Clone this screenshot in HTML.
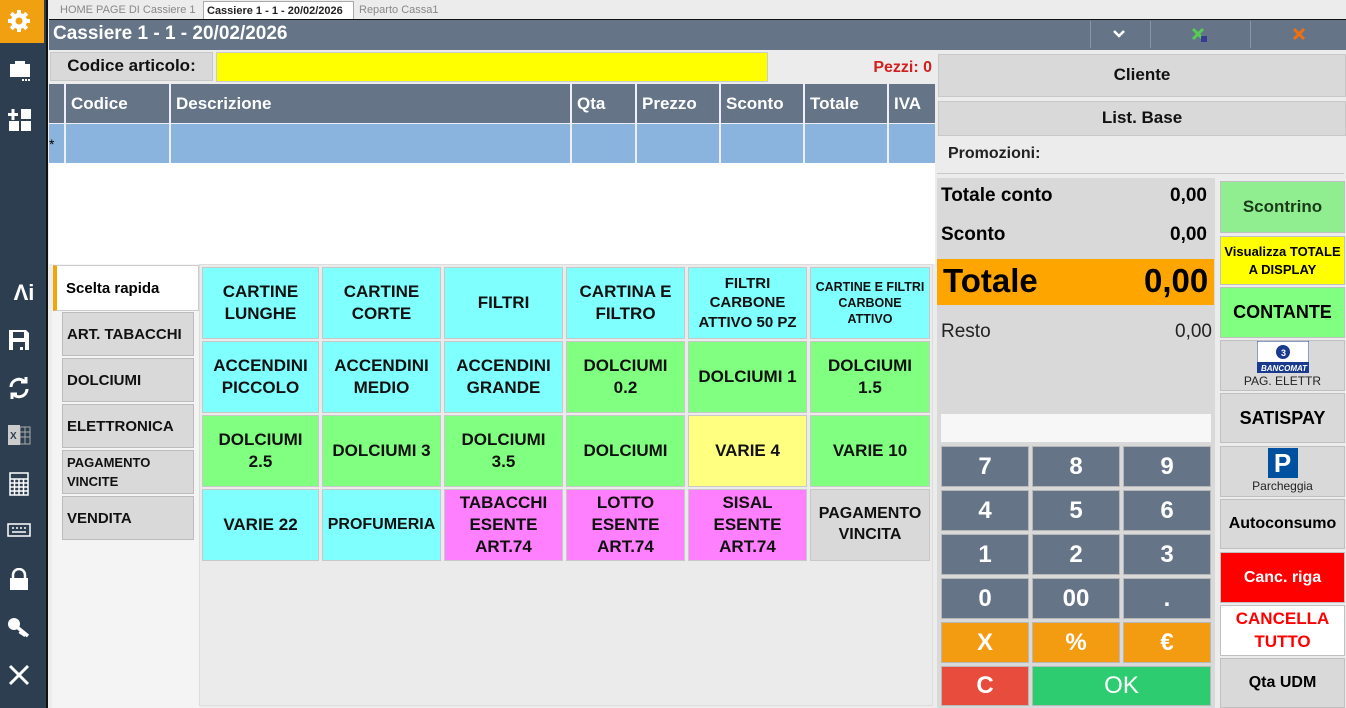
<!DOCTYPE html>
<html><head><meta charset="utf-8">
<style>
*{box-sizing:border-box;margin:0;padding:0}
body{width:1346px;height:708px;overflow:hidden;background:#ececec;font-family:"Liberation Sans",sans-serif;position:relative}
.a{position:absolute}
.b{position:absolute;display:flex;align-items:center;justify-content:center;text-align:center;font-weight:bold;border:1px solid #c8c8c8;line-height:1.3}
.g{font-size:17px;color:#111}
.c{background:#80ffff}.gr{background:#80ff80}.y{background:#ffff80}.p{background:#ff80ff}.gy{background:#d9d9d9}
.k{background:#657487;color:#fff;font-size:24px;border:1px solid #b8b8b8}
.hd{position:absolute;top:84px;height:39px;color:#fff;font-weight:bold;font-size:17px;padding:10px 0 0 5px;border-right:2px solid #eef}
.rw{position:absolute;top:124px;height:39px;background:#8ab3de;border-right:2px solid #eef}
.side{position:absolute;left:0;width:48px;display:flex;justify-content:center;color:#fff}
.tb{position:absolute;left:62px;width:132px;height:44px;background:#d9d9d9;border:1px solid #bcbcbc;font-weight:bold;font-size:15px;display:flex;align-items:center;padding-left:4px;color:#111}
.r{position:absolute;left:1220px;width:125px;display:flex;align-items:center;justify-content:center;text-align:center;font-weight:bold;border:1px solid #c0c0c0;font-size:17px;line-height:1.35}
</style></head><body>
<div class="a" style="left:0;top:0;width:48px;height:708px;background:#2d3e50;border-right:2px solid #111"></div>
<div class="a" style="left:0;top:0;width:44px;height:43px;background:#f0a010"></div>
<svg class="a" style="left:6px;top:8px" width="26" height="26" viewBox="0 0 26 26"><g fill="#fff"><circle cx="13" cy="13" r="8"/><rect x="11" y="2" width="4" height="22"/><rect x="2" y="11" width="22" height="4"/><rect x="11" y="2" width="4" height="22" transform="rotate(45 13 13)"/><rect x="11" y="2" width="4" height="22" transform="rotate(-45 13 13)"/></g><circle cx="13" cy="13" r="3.5" fill="#f0a010"/></svg>
<svg class="a" style="left:8px;top:60px" width="24" height="24"><rect x="2" y="4" width="20" height="13" fill="#fff"/><rect x="7" y="1" width="10" height="4" fill="#fff"/><rect x="14" y="19" width="2" height="2" fill="#fff"/><rect x="17" y="19" width="2" height="2" fill="#fff"/><rect x="20" y="19" width="2" height="2" fill="#fff"/></svg>
<svg class="a" style="left:8px;top:108px" width="24" height="24"><g fill="#fff"><rect x="0" y="5" width="10" height="3"/><rect x="3.5" y="1" width="3" height="11"/><rect x="13" y="1" width="10" height="10"/><rect x="1" y="13" width="10" height="10"/><rect x="13" y="13" width="10" height="10"/></g></svg>
<div class="side" style="top:280px;font-weight:bold;font-size:22px">Λi</div>
<svg class="a" style="left:8px;top:329px" width="22" height="22"><path d="M1 1h17l3 3v17H1z" fill="#fff"/><rect x="5" y="3" width="11" height="6" fill="#2d3e50"/><rect x="5" y="13" width="12" height="8" fill="#2d3e50"/><rect x="12" y="18" width="3" height="3" fill="#fff"/></svg>
<svg class="a" style="left:7px;top:376px" width="24" height="24" fill="none" stroke="#fff" stroke-width="3"><path d="M4 11a8 8 0 0 1 14-5"/><path d="M20 13a8 8 0 0 1-14 5"/><path d="M14 6h5V1" /><path d="M10 18H5v5"/></svg>
<svg class="a" style="left:7px;top:424px" width="24" height="22"><rect x="9" y="3" width="14" height="17" fill="none" stroke="#aaa"/><path d="M13 3v17M18 3v17M9 8h14M9 13h14" stroke="#aaa"/><rect x="1" y="1" width="12" height="20" fill="#ccc"/><text x="3" y="15" font-size="10" font-weight="bold" fill="#2d3e50" font-family="Liberation Sans">X</text></svg>
<svg class="a" style="left:9px;top:472px" width="20" height="24" fill="none" stroke="#fff" stroke-width="1.5"><rect x="1" y="1" width="18" height="22"/><path d="M1 7h18M1 11h18M1 15h18M1 19h18M5.5 7v16M10 7v16M14.5 7v16"/></svg>
<svg class="a" style="left:7px;top:523px" width="24" height="14" fill="none" stroke="#fff" stroke-width="1.5"><rect x="1" y="1" width="22" height="12"/><path d="M5 5h2M9 5h2M13 5h2M17 5h2M5 9h14" /></svg>
<svg class="a" style="left:9px;top:568px" width="20" height="22"><path d="M4 10V7a6 6 0 0 1 12 0v3" fill="none" stroke="#fff" stroke-width="2.5"/><rect x="1" y="10" width="18" height="12" fill="#fff"/></svg>
<svg class="a" style="left:7px;top:617px" width="24" height="22"><circle cx="7" cy="7" r="6" fill="#fff"/><path d="M10 10l11 9M15 14l-2 3M18 16l-2 3" stroke="#fff" stroke-width="3.5"/></svg>
<svg class="a" style="left:7px;top:663px" width="24" height="24"><path d="M3 3l18 18M21 3L3 21" stroke="#fff" stroke-width="3"/></svg>
<div class="a" style="left:56px;top:2px;height:17px;font-size:11px;color:#888;padding-left:4px;line-height:17px">HOME PAGE DI Cassiere 1</div>
<div class="a" style="left:203px;top:1px;width:151px;height:19px;background:#fff;border:1px solid #aaa;border-bottom:none;font-size:11px;font-weight:bold;color:#222;padding-left:3px;line-height:18px">Cassiere 1 - 1 - 20/02/2026</div>
<div class="a" style="left:359px;top:2px;font-size:11px;color:#888;line-height:17px">Reparto Cassa1</div>
<div class="a" style="left:49px;top:19px;width:1297px;height:31px;background:#657487;border-top:1px solid #111"></div>
<div class="a" style="left:53px;top:23px;color:#fff;font-weight:bold;font-size:19px">Cassiere 1 - 1 - 20/02/2026</div>
<div class="a" style="left:1090px;top:21px;width:1px;height:27px;background:#8a96a6"></div>
<div class="a" style="left:1150px;top:21px;width:1px;height:27px;background:#8a96a6"></div>
<div class="a" style="left:1250px;top:21px;width:1px;height:27px;background:#8a96a6"></div>
<svg class="a" style="left:1112px;top:29px" width="14" height="10"><path d="M2 2l5 5 5-5" fill="none" stroke="#fff" stroke-width="2.5"/></svg>
<svg class="a" style="left:1191px;top:27px" width="18" height="16"><path d="M2 2l10 10M12 2L2 12" stroke="#5c5" stroke-width="3"/><rect x="10" y="9" width="6" height="6" fill="#3a3a90"/></svg>
<svg class="a" style="left:1292px;top:27px" width="14" height="14"><path d="M2 2l10 10M12 2L2 12" stroke="#f07010" stroke-width="3"/></svg>
<div class="b" style="left:50px;top:52px;width:163px;height:29px;background:#d9d9d9;font-size:17px;color:#111">Codice articolo:</div>
<div class="a" style="left:216px;top:52px;width:552px;height:30px;background:#ffff00;border:1px solid #ccc"></div>
<div class="a" style="left:868px;top:59px;color:#d02020;font-weight:bold;font-size:16px;width:64px;text-align:right">Pezzi: 0</div>
<div class="a" style="left:49px;top:84px;width:886px;height:180px;background:#fff"></div>
<div class="a" style="left:49px;top:84px;width:886px;height:39px;background:#657487"></div>
<div class="hd" style="left:49px;width:17px"></div>
<div class="hd" style="left:66px;width:105px">Codice</div>
<div class="hd" style="left:171px;width:401px">Descrizione</div>
<div class="hd" style="left:572px;width:65px">Qta</div>
<div class="hd" style="left:637px;width:84px">Prezzo</div>
<div class="hd" style="left:721px;width:84px">Sconto</div>
<div class="hd" style="left:805px;width:84px">Totale</div>
<div class="hd" style="left:889px;width:46px;border:none">IVA</div>
<div class="a" style="left:49px;top:123px;width:886px;height:1px;background:#eef"></div>
<div class="rw" style="left:49px;width:17px;font-size:14px;padding-top:12px;text-align:left">*</div>
<div class="rw" style="left:66px;width:105px"></div>
<div class="rw" style="left:171px;width:401px"></div>
<div class="rw" style="left:572px;width:65px"></div>
<div class="rw" style="left:637px;width:84px"></div>
<div class="rw" style="left:721px;width:84px"></div>
<div class="rw" style="left:805px;width:84px"></div>
<div class="rw" style="left:889px;width:46px;border:none"></div>
<div class="a" style="left:52px;top:264px;width:148px;height:444px;background:#f4f4f4"></div>
<div class="a" style="left:53px;top:265px;width:146px;height:46px;background:#fff;border:1px solid #ccc;border-left:4px solid #f5a50a;font-weight:bold;font-size:15px;padding:14px 0 0 9px">Scelta rapida</div>
<div class="tb" style="top:312px">ART. TABACCHI</div>
<div class="tb" style="top:358px">DOLCIUMI</div>
<div class="tb" style="top:404px">ELETTRONICA</div>
<div class="tb" style="top:450px;font-size:13px;line-height:19px">PAGAMENTO<br>VINCITE</div>
<div class="tb" style="top:496px">VENDITA</div>
<div class="a" style="left:199px;top:264px;width:734px;height:442px;background:#ebebeb;border:1px solid #ddd"></div>
<div class="b g c" style="left:202px;top:267px;width:117px;height:72px">CARTINE<br>LUNGHE</div>
<div class="b g c" style="left:322px;top:267px;width:119px;height:72px">CARTINE<br>CORTE</div>
<div class="b g c" style="left:444px;top:267px;width:119px;height:72px">FILTRI</div>
<div class="b g c" style="left:566px;top:267px;width:119px;height:72px">CARTINA E<br>FILTRO</div>
<div class="b g c" style="left:688px;top:267px;width:119px;height:72px;font-size:15px">FILTRI<br>CARBONE<br>ATTIVO 50 PZ</div>
<div class="b g c" style="left:810px;top:267px;width:120px;height:72px;font-size:12.5px">CARTINE E FILTRI<br>CARBONE<br>ATTIVO</div>
<div class="b g c" style="left:202px;top:341px;width:117px;height:72px">ACCENDINI<br>PICCOLO</div>
<div class="b g c" style="left:322px;top:341px;width:119px;height:72px">ACCENDINI<br>MEDIO</div>
<div class="b g c" style="left:444px;top:341px;width:119px;height:72px">ACCENDINI<br>GRANDE</div>
<div class="b g gr" style="left:566px;top:341px;width:119px;height:72px">DOLCIUMI<br>0.2</div>
<div class="b g gr" style="left:688px;top:341px;width:119px;height:72px">DOLCIUMI 1</div>
<div class="b g gr" style="left:810px;top:341px;width:120px;height:72px">DOLCIUMI<br>1.5</div>
<div class="b g gr" style="left:202px;top:415px;width:117px;height:72px">DOLCIUMI<br>2.5</div>
<div class="b g gr" style="left:322px;top:415px;width:119px;height:72px">DOLCIUMI 3</div>
<div class="b g gr" style="left:444px;top:415px;width:119px;height:72px">DOLCIUMI<br>3.5</div>
<div class="b g gr" style="left:566px;top:415px;width:119px;height:72px">DOLCIUMI</div>
<div class="b g y" style="left:688px;top:415px;width:119px;height:72px">VARIE 4</div>
<div class="b g gr" style="left:810px;top:415px;width:120px;height:72px">VARIE 10</div>
<div class="b g c" style="left:202px;top:489px;width:117px;height:72px">VARIE 22</div>
<div class="b g c" style="left:322px;top:489px;width:119px;height:72px;font-size:16px">PROFUMERIA</div>
<div class="b g p" style="left:444px;top:489px;width:119px;height:72px">TABACCHI<br>ESENTE<br>ART.74</div>
<div class="b g p" style="left:566px;top:489px;width:119px;height:72px">LOTTO<br>ESENTE<br>ART.74</div>
<div class="b g p" style="left:688px;top:489px;width:119px;height:72px">SISAL<br>ESENTE<br>ART.74</div>
<div class="b g gy" style="left:810px;top:489px;width:120px;height:72px;font-size:16px">PAGAMENTO<br>VINCITA</div>
<div class="b" style="left:938px;top:54px;width:408px;height:43px;background:#d9d9d9;font-size:17px;color:#111">Cliente</div>
<div class="b" style="left:938px;top:101px;width:408px;height:35px;background:#d9d9d9;font-size:17px;color:#111">List. Base</div>
<div class="a" style="left:948px;top:145px;font-weight:bold;font-size:16px;color:#222">Promozioni:</div>
<div class="a" style="left:937px;top:173px;width:407px;height:1px;background:#c8c8c8"></div>
<div class="a" style="left:937px;top:178px;width:278px;height:530px;background:#d9d9d9"></div>
<div class="a" style="left:941px;top:185px;font-weight:bold;font-size:19px">Totale conto</div>
<div class="a" style="left:1170px;top:185px;font-weight:bold;font-size:19px">0,00</div>
<div class="a" style="left:941px;top:224px;font-weight:bold;font-size:19px">Sconto</div>
<div class="a" style="left:1170px;top:224px;font-weight:bold;font-size:19px">0,00</div>
<div class="a" style="left:937px;top:259px;width:277px;height:46px;background:#ffa500"></div>
<div class="a" style="left:943px;top:262px;font-weight:bold;font-size:33px">Totale</div>
<div class="a" style="left:1144px;top:262px;font-weight:bold;font-size:33px">0,00</div>
<div class="a" style="left:941px;top:321px;font-size:19px;color:#222">Resto</div>
<div class="a" style="left:1175px;top:321px;font-size:19px;color:#222">0,00</div>
<div class="a" style="left:941px;top:414px;width:270px;height:28px;background:#f7f7f7"></div>
<div class="b k" style="left:941px;top:446px;width:88px;height:41px">7</div>
<div class="b k" style="left:1032px;top:446px;width:88px;height:41px">8</div>
<div class="b k" style="left:1123px;top:446px;width:88px;height:41px">9</div>
<div class="b k" style="left:941px;top:490px;width:88px;height:41px">4</div>
<div class="b k" style="left:1032px;top:490px;width:88px;height:41px">5</div>
<div class="b k" style="left:1123px;top:490px;width:88px;height:41px">6</div>
<div class="b k" style="left:941px;top:534px;width:88px;height:41px">1</div>
<div class="b k" style="left:1032px;top:534px;width:88px;height:41px">2</div>
<div class="b k" style="left:1123px;top:534px;width:88px;height:41px">3</div>
<div class="b k" style="left:941px;top:578px;width:88px;height:41px">0</div>
<div class="b k" style="left:1032px;top:578px;width:88px;height:41px">00</div>
<div class="b k" style="left:1123px;top:578px;width:88px;height:41px">.</div>
<div class="b k" style="left:941px;top:622px;width:88px;height:41px;background:#f39c12">X</div>
<div class="b k" style="left:1032px;top:622px;width:88px;height:41px;background:#f39c12">%</div>
<div class="b k" style="left:1123px;top:622px;width:88px;height:41px;background:#f39c12">€</div>
<div class="b k" style="left:941px;top:666px;width:88px;height:40px;background:#e74c3c">C</div>
<div class="b k" style="left:1032px;top:666px;width:179px;height:40px;background:#2ecc71;font-weight:normal">OK</div>
<div class="r" style="top:181px;height:52px;background:#90ee90;color:#1a3a1a">Scontrino</div>
<div class="r" style="top:236px;height:49px;background:#ffff00;font-size:13px">Visualizza TOTALE<br>A DISPLAY</div>
<div class="r" style="top:287px;height:51px;background:#80ff80;font-size:18px">CONTANTE</div>
<div class="r" style="top:340px;height:51px;background:#d9d9d9;flex-direction:column;font-weight:normal;font-size:12px;color:#222">
<svg width="52" height="32"><rect x="0" y="0" width="52" height="32" fill="#fff" stroke="#1a3a90"/><circle cx="26" cy="11" r="7" fill="#1a3a90"/><text x="24" y="15" font-size="9" fill="#fff" font-family="Liberation Sans" font-weight="bold">3</text><rect x="0" y="21" width="52" height="11" fill="#1a3a90"/><text x="4" y="30" font-size="8" fill="#fff" font-family="Liberation Sans" font-weight="bold" font-style="italic">BANCOMAT</text></svg>PAG. ELETTR</div>
<div class="r" style="top:393px;height:50px;background:#d9d9d9;font-size:18px">SATISPAY</div>
<div class="r" style="top:446px;height:51px;background:#d9d9d9;flex-direction:column;font-weight:normal;font-size:12px;color:#222">
<div style="width:30px;height:30px;background:#0050a0;color:#fff;font-weight:bold;font-size:26px;line-height:30px">P</div>Parcheggia</div>
<div class="r" style="top:499px;height:50px;background:#d9d9d9;font-size:16px">Autoconsumo</div>
<div class="r" style="top:552px;height:51px;background:#ff0000;color:#fff;font-size:16px">Canc. riga</div>
<div class="r" style="top:605px;height:51px;background:#fff;color:#ff0000;font-size:17px">CANCELLA<br>TUTTO</div>
<div class="r" style="top:658px;height:50px;background:#d9d9d9;font-size:16px">Qta UDM</div>
</body></html>
